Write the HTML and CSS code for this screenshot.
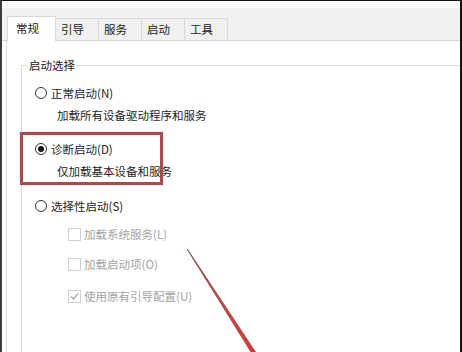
FILE: index.html
```html
<!DOCTYPE html>
<html lang="zh-CN">
<head>
<meta charset="utf-8">
<link rel="stylesheet" href="styles.css">
</head>
<body>
<div class="window">
  <div class="topgap"></div>
  <div class="tabbar">
    <div class="tab active">常规</div>
    <div class="tab">引导</div>
    <div class="tab">服务</div>
    <div class="tab">启动</div>
    <div class="tab">工具</div>
  </div>
  <div class="panel">
    <fieldset class="group">
      <legend class="legend">启动选择</legend>
      <div class="row radio-row r1"><span class="radio"></span><span>正常启动(N)</span></div>
      <div class="row desc d1">加载所有设备驱动程序和服务</div>
      <div class="row radio-row r2"><span class="radio checked"></span><span>诊断启动(D)</span></div>
      <div class="row desc d2">仅加载基本设备和服务</div>
      <div class="row radio-row r3"><span class="radio"></span><span>选择性启动(S)</span></div>
      <div class="row check-row c1"><span class="check"></span><span>加载系统服务(L)</span></div>
      <div class="row check-row c2"><span class="check"></span><span>加载启动项(O)</span></div>
      <div class="row check-row c3"><svg class="checkmark" width="13" height="13" viewBox="0 0 13 13"><rect x="0.5" y="0.5" width="12" height="12" fill="#fff" stroke="#cfcfcf"/><polyline points="3,6.5 5.5,9 10,3.5" fill="none" stroke="#a8a8a8" stroke-width="1.3"/></svg><span>使用原有引导配置(U)</span></div>
    </fieldset>
  </div>
  <div class="highlight"></div>
  <svg class="arrow" width="462" height="352" viewBox="0 0 462 352">
    <defs>
      <linearGradient id="ag" x1="187" y1="249" x2="253" y2="352" gradientUnits="userSpaceOnUse">
        <stop offset="0" stop-color="#6f6666"/>
        <stop offset="0.35" stop-color="#a9504f"/>
        <stop offset="1" stop-color="#c8403c"/>
      </linearGradient>
    </defs>
    <polygon points="186.5,249 187.8,249 256,352 250.5,352" fill="url(#ag)"/>
  </svg>
</div>
</body>
</html>
```

FILE: styles.css
```css
html, body {
  margin: 0;
  padding: 0;
  background: #fff;
}
body {
  width: 462px;
  height: 352px;
  overflow: hidden;
  font-family: "Noto Sans CJK SC", "Microsoft YaHei", sans-serif;
  font-size: 11.5px;
  color: #1e1e1e;
}
.window {
  position: relative;
  box-sizing: border-box;
  width: 462px;
  height: 352px;
  border-top: 1px solid #141414;
  border-left: 2px solid #3a3a3a;
  border-right: 2px solid #141414;
  background: #fff;
  overflow: hidden;
  display: flex;
  flex-direction: column;
}
.topgap {
  flex: none;
  height: 7px;
  background: #fafafa;
}
.tabbar {
  flex: none;
  height: 33px;
  box-sizing: border-box;
  background: #f1f1f1;
  border-bottom: 1px solid #d9d9d9;
  display: flex;
  align-items: flex-end;
  padding-left: 5px;
}
.tab {
  box-sizing: border-box;
  height: 22px;
  padding: 0 14px 0 5px;
  line-height: 20px;
  border: 1px solid #d9d9d9;
  border-bottom: none;
  border-left: none;
  background: #f0f0f0;
  color: #222;
}
.tab.active {
  height: 25px;
  margin-bottom: -1px;
  padding: 0 16px 0 8px;
  line-height: 22px;
  background: #fff;
  border-left: 1px solid #d9d9d9;
}
.panel {
  flex: 1;
  min-height: 0;
  overflow: hidden;
  margin-left: 4px;
  border-left: 1px solid #dadada;
  padding: 16px 0 0 14px;
}
.group {
  margin: 0 -20px 0 0;
  padding: 11px 0 0 0;
  border: 1px solid #dcdcdc;
  height: 400px;
  min-width: 0;
}
.legend {
  margin-left: 5px;
  padding: 0 2px;
  line-height: 16px;
  color: #222;
}
.row {
  height: 18px;
  line-height: 18px;
  display: flex;
  align-items: center;
  white-space: nowrap;
}
.radio-row {
  padding-left: 13px;
}
.radio {
  box-sizing: border-box;
  width: 12px;
  height: 12px;
  border: 1px solid #333;
  border-radius: 50%;
  background: #fff;
  margin-right: 4px;
  display: flex;
  align-items: center;
  justify-content: center;
  flex: none;
}
.radio.checked::after {
  content: "";
  width: 6px;
  height: 6px;
  border-radius: 50%;
  background: #111;
}
.desc {
  padding-left: 35px;
}
.check-row {
  padding-left: 46px;
  color: #a3a3a3;
}
.check {
  box-sizing: border-box;
  width: 13px;
  height: 13px;
  border: 1px solid #cfcfcf;
  background: #fff;
  margin-right: 3px;
  flex: none;
}
.checkmark {
  margin-right: 3px;
  flex: none;
}
.d1 { margin-top: 4px; }
.r2 { margin-top: 16px; }
.d2 { margin-top: 4px; }
.r3 { margin-top: 17px; }
.c1 { margin-top: 10px; }
.c2 { margin-top: 12px; }
.c3 { margin-top: 14px; }
.highlight {
  position: absolute;
  left: 18px;
  top: 131px;
  width: 143px;
  height: 53px;
  box-sizing: border-box;
  border: 3px solid #a84c50;
  box-shadow: 0 0 1px rgba(168, 76, 80, 0.6);
}
.arrow {
  position: absolute;
  left: -2px;
  top: -1px;
  pointer-events: none;
}
```
